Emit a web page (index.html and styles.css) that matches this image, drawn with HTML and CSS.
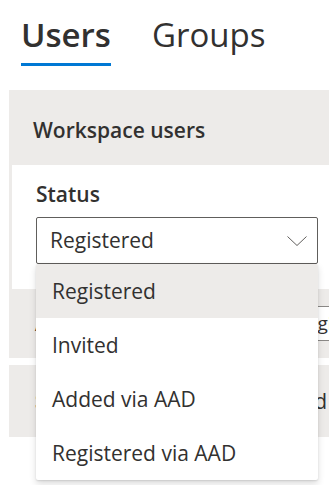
FILE: index.html
```html
<!DOCTYPE html>
<html lang="en">
<head>
<meta charset="utf-8">
<title>Users</title>
<link rel="stylesheet" href="styles.css">
</head>
<body>
  <nav class="tabs">
    <span class="tab tab-active">Users</span>
    <span class="tab">Groups</span>
  </nav>

  <section class="panel">
    <h2 class="panel-title">Workspace users</h2>
    <div class="card">
      <div class="field-label">Status</div>
      <div class="dropdown">
        <div class="dropdown-box">
          <span class="dropdown-value">Registered</span>
          <svg class="chevron" width="20" height="10" viewBox="0 0 20 10" aria-hidden="true">
            <polyline points="0.5,0.5 10,9.5 19.5,0.5" fill="none" stroke="#605e5c" stroke-width="1"/>
          </svg>
        </div>
        <ul class="menu">
          <li class="menu-item menu-item-selected">Registered</li>
          <li class="menu-item">Invited</li>
          <li class="menu-item">Added via AAD</li>
          <li class="menu-item">Registered via AAD</li>
        </ul>
      </div>
    </div>
    <div class="row">
      <span class="row-label">Access level</span>
      <div class="row-input">Registered</div>
    </div>
  </section>

  <section class="panel panel-second">
    <div class="row row-tall">
      <span class="row-label">Sign-in</span>
      <span class="row-value">Registered</span>
    </div>
  </section>

  <p class="footnote">Learn about the user statuses</p>
</body>
</html>
```

FILE: styles.css
```css
html {
  overflow: hidden;
}

body {
  margin: 0;
  padding: 0;
  background: #ffffff;
  font-family: "Open Sans", "Noto Sans", sans-serif;
  color: #323130;
}

.tabs {
  display: flex;
  gap: 41px;
  padding: 13px 0 0 21px;
}

.tab {
  font-size: 33px;
  line-height: 44px;
  font-weight: 400;
  padding-bottom: 6px;
  border-bottom: 3px solid transparent;
}

.tab-active {
  font-weight: 600;
  border-bottom-color: #0078d4;
}

.panel {
  margin: 24px 0 0 9px;
  background: #edebe9;
}

.panel-second {
  margin-top: 7px;
}

.panel-title {
  margin: 0;
  padding: 26px 24px 21px;
  font-size: 21px;
  line-height: 28px;
  font-weight: 600;
}

.card {
  margin-left: 3px;
  background: #ffffff;
  padding: 15px 11px 25px 24px;
}

.field-label {
  font-size: 21px;
  line-height: 28px;
  font-weight: 600;
}

.dropdown {
  position: relative;
  margin-top: 9px;
}

.dropdown-box {
  display: flex;
  align-items: center;
  justify-content: space-between;
  height: 45px;
  border: 1px solid #605e5c;
  border-radius: 2px;
  padding: 0 10px 0 13px;
  background: #ffffff;
}

.dropdown-value {
  font-size: 21px;
  line-height: 45px;
}

.chevron {
  display: block;
}

.menu {
  position: absolute;
  top: 100%;
  left: 0;
  right: 0;
  z-index: 10;
  margin: 0;
  padding: 0;
  list-style: none;
  background: #ffffff;
  border-radius: 2px;
  box-shadow: 0 3.2px 7.2px rgba(0, 0, 0, 0.132), 0 0.6px 1.8px rgba(0, 0, 0, 0.108);
  overflow: hidden;
}

.menu-item {
  height: 54px;
  line-height: 54px;
  padding-left: 16px;
  font-size: 21px;
}

.menu-item-selected {
  background: #edebe9;
}

.row {
  display: flex;
  align-items: center;
  height: 69px;
  padding-left: 26px;
  overflow: hidden;
}

.row-tall {
  height: 72px;
}

.row-label {
  font-size: 19px;
  font-weight: 600;
  white-space: nowrap;
}

.row-input {
  flex: none;
  margin-left: auto;
  margin-right: -87px;
  width: 120px;
  height: 33px;
  line-height: 33px;
  border: 1px solid #8a8886;
  background: #ffffff;
  padding-left: 10px;
  font-size: 19px;
  white-space: nowrap;
}

.row-value {
  margin-left: auto;
  padding-right: 2px;
  font-size: 21px;
  white-space: nowrap;
}

.footnote {
  margin: 43px 0 0;
  padding-left: 117px;
  font-size: 16px;
  line-height: 22px;
}
```
